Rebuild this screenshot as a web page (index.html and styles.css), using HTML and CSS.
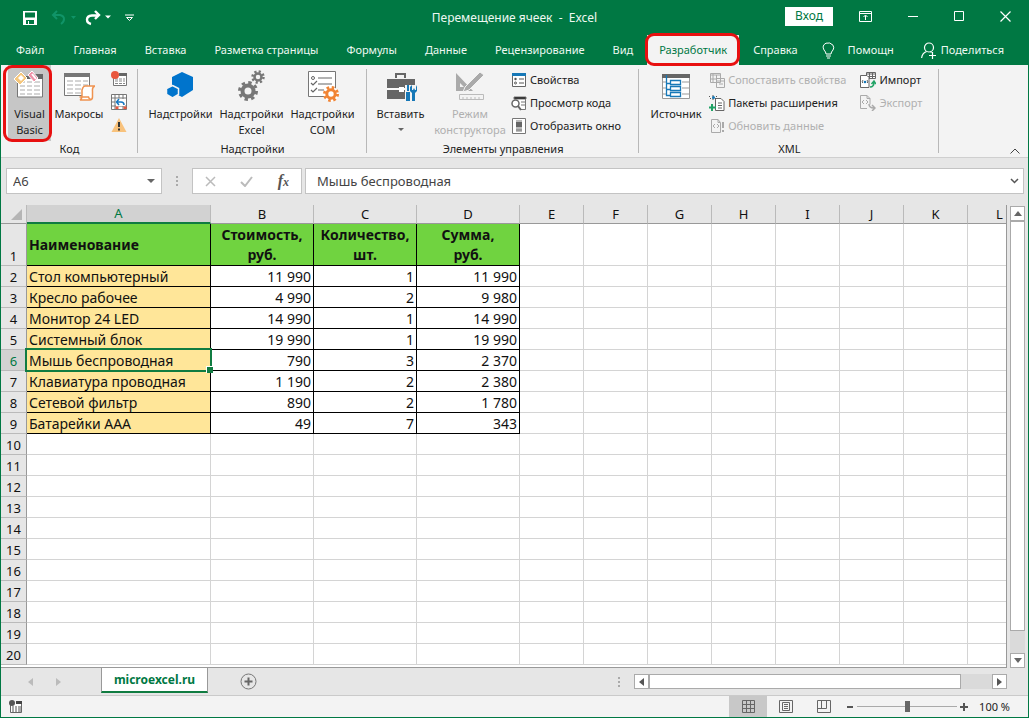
FILE: index.html
```html
<!DOCTYPE html>
<html lang="ru">
<head>
<meta charset="utf-8">
<title>Перемещение ячеек - Excel</title>
<link rel="stylesheet" href="styles.css">
</head>
<body>
<div class="window">
  <header class="titlebar">
    <div class="quick">
      <button aria-label="Сохранить"><svg width="16" height="16" viewBox="0 0 16 16"><path d="M1 1h14v14H1z" fill="#fff"/><path d="M3 2.500h10v5H3zM4 10h8v4H7v-3H6v3H4z" fill="#007843"/></svg></button>
      <button aria-label="Отменить" class="undo"><svg width="25" height="16" viewBox="0 0 25 16"><path d="M6 1L2 5l4 4M2 5h7q4 1 4 4t-3 5" fill="none" stroke="#109468" stroke-width="2"/><path d="M20 6h5l-2.500 3z" fill="#109468"/></svg></button>
      <button aria-label="Вернуть"><svg width="26" height="16" viewBox="0 0 26 16"><path d="M10 1l4 4-4 4M14 5.500H7Q2 6 2 9.500T6 14" fill="none" stroke="#fff" stroke-width="2.400"/><path d="M20 5.500h6l-3 3z" fill="#fff"/></svg></button>
      <button aria-label="Настройка панели"><svg width="9" height="8" viewBox="0 0 9 8"><path d="M0 1h9M1.500 3.500h6l-3 3z" fill="none" stroke="#fff"/></svg></button>
    </div>
    <div class="doc-title">Перемещение ячеек&nbsp; -&nbsp; Excel</div>
    <div class="win-controls">
      <button class="login">Вход</button>
      <button aria-label="Параметры ленты"><svg width="13" height="11" viewBox="0 0 13 11"><path d="M.5.5h12v10H.5zM.5 2.500h12M6.500 9V4.500M4.500 6l2-2 2 2" fill="none" stroke="#fff"/></svg></button>
      <button aria-label="Свернуть"><svg width="10" height="11" viewBox="0 0 10 11"><path d="M0 5.500h10" stroke="#fff"/></svg></button>
      <button aria-label="Развернуть"><svg width="10" height="11" viewBox="0 0 10 11"><path d="M.5.5h9v9h-9z" fill="none" stroke="#fff"/></svg></button>
      <button aria-label="Закрыть"><svg width="11" height="11" viewBox="0 0 11 11"><path d="M.5.5l10 10M10.500.5l-10 10" stroke="#fff" stroke-width="1.200"/></svg></button>
    </div>
  </header>
  <nav class="tabs">
    <button class="file">Файл</button><button>Главная</button><button>Вставка</button><button>Разметка страницы</button><button>Формулы</button><button>Данные</button><button>Рецензирование</button><button>Вид</button><button class="active">Разработчик</button><button>Справка</button>
    <button class="help"><svg width="13" height="17" viewBox="0 0 13 17"><path d="M4 12q0-2-2-4Q-.5 3.500 4 1.200q4-1.400 7 2Q12.500 6 11 8 9 10 9 12zM4 14h5M5 16h3" fill="none" stroke="#fff"/></svg>Помощн</button>
    <button class="share"><svg width="16" height="17" viewBox="0 0 16 17"><circle cx="8" cy="5.500" r="4.500" fill="none" stroke="#fff" stroke-width="1.200"/><path d="M.6 16q.6-5 5-6.500M9.500 9.500l1 1M8 13.500h7M11.500 10v7" fill="none" stroke="#fff" stroke-width="1.200"/></svg>Поделиться</button>
  </nav>

  <section class="ribbon">
    <div class="group">
      <div class="tools code">
        <button class="big vb"><svg width="32" height="32" viewBox="0 0 32 32"><path d="M3.500 8v19h25V6" fill="#fff" stroke="#777"/><path d="M19 4h10v5H3V6h16z" fill="#666"/><path d="M6 12h5M13 12h5M20 12h6M6 16h5M13 16h5M20 16h6M6 20h5M13 20h5M20 20h6M6 24h5M13 24h5M20 24h6" stroke="#aaa"/><path d="M0 9l7-7 6 6-7 7z" fill="#f5c77d" stroke="#fff"/><path d="M4 8l3-3 3 3-3 3z" fill="#fff"/><path d="M14 5l4-4 6 7-4 4z" fill="#f090a7" stroke="#fff"/><path d="M18 4l4 5" stroke="#fff" stroke-width="2"/></svg><span>Visual<br>Basic</span></button>
        <button class="big macros"><svg width="32" height="32" viewBox="0 0 32 32"><path d="M1.500 4.500h25v21h-25z" fill="#fff" stroke="#777"/><path d="M1 3h26v4H1z" fill="#777"/><path d="M4 11h6M12 11h6M20 11h5M4 15h6M12 15h6M20 15h5M4 19h6M12 19h6M4 23h6M12 23h6" stroke="#aaa"/><path d="M20 17.500q1-2 3-1.500h9q-3 1-2.500 5v6q0 3-3 3H17q2-1 2-4v-6z" fill="#fff" stroke="#ef9350" stroke-width="1.500"/><path d="M16.500 27h9q1 3 3 2" fill="none" stroke="#ef9350" stroke-width="1.500"/></svg><span>Макросы</span></button>
        <div class="mini">
          <button aria-label="Запись макроса"><svg width="16" height="16" viewBox="0 0 16 16"><path d="M2.500 3.500h13v11h-13z" fill="#fff" stroke="#777"/><path d="M8 2h8v3H8z" fill="#666"/><path d="M4 8h3M8 8h3M12 8h2M4 10h3M8 10h3M12 10h2M4 12.500h3M8 12.500h3M12 12.500h2" stroke="#888"/><circle cx="4" cy="4" r="4" fill="#e9573e"/></svg></button>
          <button aria-label="Относительные ссылки"><svg width="16" height="16" viewBox="0 0 16 16"><path d="M.5.5h15v15H.5zM.5 4h15M4 .5v15M8 .5V4M12 .5v15M.5 8H4M.5 12h15" fill="#fff" stroke="#777"/><path d="M5 5h9v7H5z" fill="#fff"/><path d="M8 5L5.500 8 8 11M6 8h4q3 0 3 3" fill="none" stroke="#1778c2" stroke-width="1.500"/><path d="M4.500 12.500h3v2.500h-3zM12.500 12.500h3v2.500h-3z" fill="#e9573e"/></svg></button>
          <button aria-label="Безопасность макросов"><svg width="16" height="16" viewBox="0 0 16 16"><path d="M8 1l7.500 14H.5z" fill="#f8c27c"/><path d="M8 5v5M8 11.500v2" stroke="#333" stroke-width="2"/></svg></button>
        </div>
      </div>
      <div class="caption">Код</div>
    </div>
    <div class="group">
      <div class="tools addins">
        <button class="big"><svg width="32" height="32" viewBox="0 0 32 32"><path d="M17 2l11 5v13l-11 7L7 22V7z" fill="#0074cc"/><path d="M7.500 15.500l6 3v6l-6 3.500-6-3.500v-6z" fill="#0074cc" stroke="#f3f3f3" stroke-width="1.500"/></svg><span>Надстройки</span></button>
        <button class="big"><svg width="32" height="32" viewBox="0 0 32 32"><circle cx="12" cy="21" r="5.500" fill="none" stroke="#777" stroke-width="4"/><circle cx="12" cy="21" r="8.500" fill="none" stroke="#777" stroke-width="3" stroke-dasharray="3.400 3.275"/><circle cx="22" cy="7" r="3.500" fill="none" stroke="#777" stroke-width="2.500"/><circle cx="22" cy="7" r="5.500" fill="none" stroke="#777" stroke-width="2.500" stroke-dasharray="2.160 2.160"/></svg><span>Надстройки<br>Excel</span></button>
        <button class="big"><svg width="34" height="32" viewBox="0 0 34 32"><path d="M2.500 1.500h27v25h-27z" fill="#fff" stroke="#777"/><circle cx="7" cy="8" r="1.500" fill="none" stroke="#666"/><path d="M12 8h14M12 14h14M12 20h6M5 13l2 2 4-4M5 20l2 2 4-4" fill="none" stroke="#666" stroke-width="1.200"/><circle cx="25" cy="24" r="7.500" fill="#fff"/><circle cx="25" cy="24" r="4.200" fill="none" stroke="#f18434" stroke-width="3"/><circle cx="25" cy="24" r="6.500" fill="none" stroke="#f18434" stroke-width="3" stroke-dasharray="2.550 2.550"/></svg><span>Надстройки<br>COM</span></button>
      </div>
      <div class="caption">Надстройки</div>
    </div>
    <div class="group">
      <div class="tools controls">
        <button class="big insert"><svg width="32" height="32" viewBox="0 0 32 32"><path d="M11 8V4h9v4" fill="none" stroke="#666" stroke-width="2"/><path d="M2 9h28v9H2zM2 20h18v9H2z" fill="#666"/><path d="M2 19h13M18 19h4" stroke="#fff"/><path d="M14 17h5v5h-5z" fill="#fff"/><path d="M20 15h12v17H20z" fill="#f3f3f3"/><path d="M22 15h2v6h-2zM21 22h4v9h-4zM27 15v5h1l1-2 1 2h1v-5l1 2v4l-2 2v8h-3v-8l-2-2v-4z" fill="#1778b7"/></svg><span>Вставить</span><i class="caret"></i></button>
        <button class="big design" disabled><svg width="32" height="32" viewBox="0 0 32 32"><path d="M2 3l17 18H2zM6 13v4h4z" fill="#aaa" fill-rule="evenodd"/><path d="M11 17L26 2l4 3-15 15-6 2z" fill="#aaa" stroke="#f3f3f3"/><path d="M5.500 24.500h24v5h-24zM9 27v2M13 27v2M17 27v2M21 27v2M25 27v2" fill="none" stroke="#bbb"/></svg><span>Режим<br>конструктора</span></button>
        <div class="list">
          <button><svg width="16" height="16" viewBox="0 0 16 16"><path d="M1.500 1.500h13v13h-13z" fill="#fff" stroke="#666"/><path d="M1 1h14v3H1z" fill="#1778b7"/><circle cx="4.500" cy="7" r="1.200" fill="#555"/><circle cx="4.500" cy="11" r="1" fill="#fff" stroke="#555"/><path d="M8 7h5M8 11h5" stroke="#555"/></svg>Свойства</button>
          <button><svg width="16" height="16" viewBox="0 0 16 16"><path d="M3.500 2.500h11v12H9" fill="#fff" stroke="#777"/><path d="M3 2h12v2H3zM10 7h4M10 10h4" stroke="#777"/><circle cx="4.500" cy="8.500" r="3.500" fill="#fff" stroke="#666" stroke-width="1.500"/><path d="M7 11l3 4" stroke="#666" stroke-width="2"/></svg>Просмотр кода</button>
          <button><svg width="16" height="16" viewBox="0 0 16 16"><path d="M1.500.5h13v15h-13z" fill="#fff" stroke="#777"/><path d="M5 2h6v12H5z" fill="#bbb"/><path d="M5 4h6v5H5z" fill="#666"/><path d="M5 12h6" stroke="#777"/></svg>Отобразить окно</button>
        </div>
      </div>
      <div class="caption">Элементы управления</div>
    </div>
    <div class="group">
      <div class="tools xml">
        <button class="big source"><svg width="32" height="32" viewBox="0 0 32 32"><path d="M2.500 4.500h27v24h-27z" fill="#fff" stroke="#999"/><path d="M2 4h28v4H2z" fill="#666"/><path d="M22 12h7M22 18h7M22 24h7M3 12h3M3 18h3M3 24h3" stroke="#999"/><path d="M6.500 5v20.500H10M6.500 13.500H10M6.500 19.500H10M10.500 10.500h10v4h-10zM10.500 16.500h10v4h-10zM10.500 22.500h10v4h-10z" fill="none" stroke="#1778b7" stroke-width="1.300"/></svg><span>Источник</span></button>
        <div class="list">
          <button disabled><svg width="16" height="16" viewBox="0 0 16 16"><path d="M1.500 1.500h10v9h-10zM1 3h11M4 1v10M7.500 3v8M1 7h7M7.500 6.500h8v9h-8zM7 9h9M10 12h4" fill="none" stroke="#aaa"/></svg>Сопоставить свойства</button>
          <button><svg width="16" height="16" viewBox="0 0 16 16"><path d="M6.500 3.500H12l3 3v9H6.500zM9 8h4M9 10.500h4M9 13h4" fill="#fff" stroke="#666"/><path d="M0 2l1-1M2 3L1 4M7 2l1-1M6 3l1 1M3 1h2M3 4h2" stroke="#555"/><circle cx="4.500" cy="2.500" r="1.500" fill="#1778b7"/><path d="M3 9v7M0 12.500h7" stroke="#21a366" stroke-width="2"/></svg>Пакеты расширения</button>
          <button disabled><svg width="16" height="16" viewBox="0 0 16 16"><path d="M2.500 1.500H9l2.500 3v10h-9zM9 1.500v3h2M6 6L4 8l2 2M8 6l2 2-2 2" fill="none" stroke="#aaa"/><path d="M14 4v6M14 12v2" stroke="#aaa" stroke-width="2"/></svg>Обновить данные</button>
        </div>
        <div class="list">
          <button><svg width="16" height="16" viewBox="0 0 16 16"><path d="M6.500.5h9v6h-9zM6 2h10M9.500 1v5M12.500 1v5M6 4.500h10" fill="#fff" stroke="#666"/><path d="M.5 3.500H7l2 2v10H.5z" fill="#fff" stroke="#666"/><path d="M3 8l-1 2 1 1M7 8l1 2-1 1" fill="none" stroke="#666"/><circle cx="5" cy="10" r="1.300" fill="#1778b7"/><path d="M10 15q4 0 4-5M11.500 12L14 9l2 3" fill="none" stroke="#21a366" stroke-width="1.500"/></svg>Импорт</button>
          <button disabled><svg width="16" height="16" viewBox="0 0 16 16"><path d="M.5.5H7l3 3v6M.5.5v13H7M7 .5v3h3M4 5L2 7l2 2M6 5l2 2-2 2" fill="none" stroke="#aaa"/><path d="M9 9q0 4 5 4M12 10l3 3-3 3" fill="none" stroke="#aaa" stroke-width="1.500"/></svg>Экспорт</button>
        </div>
      </div>
      <div class="caption">XML</div>
    </div>
    <button class="collapse" aria-label="Свернуть ленту"><svg width="10" height="6" viewBox="0 0 10 6"><path d="M.5 5.500L5 1l4.500 4.500" fill="none" stroke="#444"/></svg></button>
  </section>

  <section class="formula-bar">
    <div class="name-box"><input value="A6" aria-label="Имя"><i class="caret"></i></div>
    <span class="grip"><i></i><i></i><i></i></span>
    <div class="fx">
      <button aria-label="Отмена"><svg width="11" height="11" viewBox="0 0 11 11"><path d="M1 1l9 9M10 1l-9 9" stroke="#bbb" stroke-width="1.500"/></svg></button>
      <button aria-label="Ввод"><svg width="13" height="11" viewBox="0 0 13 11"><path d="M1 6l4 4 7-9" fill="none" stroke="#bbb" stroke-width="2"/></svg></button>
      <button class="fn" aria-label="Вставить функцию">f<small>x</small></button>
    </div>
    <div class="formula"><input value="Мышь беспроводная" aria-label="Формула"><svg width="9" height="6" viewBox="0 0 9 6"><path d="M1 1l3.500 3.500L8 1" fill="none" stroke="#555" stroke-width="1.500"/></svg></div>
  </section>

  <main class="workspace">
    <div class="sheet">
      <table>
        <colgroup><col class="c-head"><col class="c-a"><col class="c-b"><col class="c-b"><col class="c-b"><col class="c-e"><col class="c-e"><col class="c-e"><col class="c-e"><col class="c-e"><col class="c-e"><col class="c-e"><col class="c-e"></colgroup>
        <thead><tr><th class="corner"><i></i></th><th class="sel">A</th><th>B</th><th>C</th><th>D</th><th>E</th><th>F</th><th>G</th><th>H</th><th>I</th><th>J</th><th>K</th><th>L</th></tr></thead>
        <tbody>
          <tr class="head"><th>1</th><td class="h left">Наименование</td><td class="h">Стоимость,<br>руб.</td><td class="h">Количество,<br>шт.</td><td class="h">Сумма,<br>руб.</td><td></td><td></td><td></td><td></td><td></td><td></td><td></td><td></td></tr>
          <tr><th>2</th><td class="n">Стол компьютерный</td><td class="v">11 990</td><td class="v">1</td><td class="v">11 990</td><td></td><td></td><td></td><td></td><td></td><td></td><td></td><td></td></tr>
          <tr><th>3</th><td class="n">Кресло рабочее</td><td class="v">4 990</td><td class="v">2</td><td class="v">9 980</td><td></td><td></td><td></td><td></td><td></td><td></td><td></td><td></td></tr>
          <tr><th>4</th><td class="n">Монитор 24 LED</td><td class="v">14 990</td><td class="v">1</td><td class="v">14 990</td><td></td><td></td><td></td><td></td><td></td><td></td><td></td><td></td></tr>
          <tr><th>5</th><td class="n">Системный блок</td><td class="v">19 990</td><td class="v">1</td><td class="v">19 990</td><td></td><td></td><td></td><td></td><td></td><td></td><td></td><td></td></tr>
          <tr><th class="sel">6</th><td class="n cursor">Мышь беспроводная</td><td class="v">790</td><td class="v">3</td><td class="v">2 370</td><td></td><td></td><td></td><td></td><td></td><td></td><td></td><td></td></tr>
          <tr><th>7</th><td class="n">Клавиатура проводная</td><td class="v">1 190</td><td class="v">2</td><td class="v">2 380</td><td></td><td></td><td></td><td></td><td></td><td></td><td></td><td></td></tr>
          <tr><th>8</th><td class="n">Сетевой фильтр</td><td class="v">890</td><td class="v">2</td><td class="v">1 780</td><td></td><td></td><td></td><td></td><td></td><td></td><td></td><td></td></tr>
          <tr><th>9</th><td class="n">Батарейки ААА</td><td class="v">49</td><td class="v">7</td><td class="v">343</td><td></td><td></td><td></td><td></td><td></td><td></td><td></td><td></td></tr>
          <tr><th>10</th><td></td><td></td><td></td><td></td><td></td><td></td><td></td><td></td><td></td><td></td><td></td><td></td></tr>
          <tr><th>11</th><td></td><td></td><td></td><td></td><td></td><td></td><td></td><td></td><td></td><td></td><td></td><td></td></tr>
          <tr><th>12</th><td></td><td></td><td></td><td></td><td></td><td></td><td></td><td></td><td></td><td></td><td></td><td></td></tr>
          <tr><th>13</th><td></td><td></td><td></td><td></td><td></td><td></td><td></td><td></td><td></td><td></td><td></td><td></td></tr>
          <tr><th>14</th><td></td><td></td><td></td><td></td><td></td><td></td><td></td><td></td><td></td><td></td><td></td><td></td></tr>
          <tr><th>15</th><td></td><td></td><td></td><td></td><td></td><td></td><td></td><td></td><td></td><td></td><td></td><td></td></tr>
          <tr><th>16</th><td></td><td></td><td></td><td></td><td></td><td></td><td></td><td></td><td></td><td></td><td></td><td></td></tr>
          <tr><th>17</th><td></td><td></td><td></td><td></td><td></td><td></td><td></td><td></td><td></td><td></td><td></td><td></td></tr>
          <tr><th>18</th><td></td><td></td><td></td><td></td><td></td><td></td><td></td><td></td><td></td><td></td><td></td><td></td></tr>
          <tr><th>19</th><td></td><td></td><td></td><td></td><td></td><td></td><td></td><td></td><td></td><td></td><td></td><td></td></tr>
          <tr><th>20</th><td></td><td></td><td></td><td></td><td></td><td></td><td></td><td></td><td></td><td></td><td></td><td></td></tr>
        </tbody>
      </table>
    </div>
    <div class="vscroll">
      <button aria-label="Вверх"><svg width="8" height="5" viewBox="0 0 8 5"><path d="M0 5l4-5 4 5z" fill="#666"/></svg></button>
      <div class="vtrack"><div class="vthumb"></div></div>
      <button aria-label="Вниз"><svg width="8" height="5" viewBox="0 0 8 5"><path d="M0 0l4 5 4-5z" fill="#666"/></svg></button>
    </div>
  </main>

  <div class="sheetbar">
    <div class="sheet-nav">
      <button aria-label="Предыдущий лист"><svg width="5" height="8" viewBox="0 0 5 8"><path d="M5 0v8L0 4z" fill="#bbb"/></svg></button>
      <button aria-label="Следующий лист"><svg width="5" height="8" viewBox="0 0 5 8"><path d="M0 0v8l5-4z" fill="#bbb"/></svg></button>
    </div>
    <button class="sheet-tab">microexcel.ru</button>
    <button class="add" aria-label="Новый лист"><svg width="17" height="17" viewBox="0 0 17 17"><circle cx="8.500" cy="8.500" r="7.500" fill="none" stroke="#777"/><path d="M8.500 4.500v8M4.500 8.500h8" stroke="#666" stroke-width="2"/></svg></button>
    <span class="grip"><i></i><i></i><i></i></span>
    <div class="hscroll">
      <button aria-label="Влево"><svg width="5" height="8" viewBox="0 0 5 8"><path d="M5 0v8L0 4z" fill="#555"/></svg></button>
      <div class="htrack"><div class="hthumb"></div></div>
      <button aria-label="Вправо"><svg width="5" height="8" viewBox="0 0 5 8"><path d="M0 0v8l5-4z" fill="#555"/></svg></button>
    </div>
  </div>

  <footer class="status">
    <button class="record" aria-label="Запись макроса"><svg width="14" height="14" viewBox="0 0 14 14"><path d="M1.500 4v8.500h11V2" fill="#fff" stroke="#666"/><path d="M7 1h6v3H7z" fill="#444"/><path d="M3 7h2M6 7h2M9 7h3M3 9h2M6 9h2M9 9h3M3 11h2M6 11h2M9 11h3" stroke="#555"/><circle cx="3" cy="3" r="3" fill="#555"/></svg></button>
    <button class="view on" aria-label="Обычный"><svg width="13" height="13" viewBox="0 0 13 13"><path d="M.5.5h12v12H.5zM4.500 0v13M8.500 0v13M0 4.500h13M0 8.500h13" fill="none" stroke="#666"/></svg></button>
    <button class="view" aria-label="Разметка"><svg width="14" height="13" viewBox="0 0 14 13"><path d="M.5.5h13v12H.5zM3.500 2.500h7v8h-7zM5 4.500h4M5 6.500h4M5 8.500h4" fill="none" stroke="#666"/></svg></button>
    <button class="view" aria-label="Страничный"><svg width="14" height="13" viewBox="0 0 14 13"><path d="M.5.5h13v12H.5zM4.500 0v8.500M9.500 0v8.500M0 8.500h9.500" fill="none" stroke="#666"/></svg></button>
    <button class="zoom-btn" aria-label="Уменьшить"><svg width="8" height="8" viewBox="0 0 8 8"><path d="M1 4h6" stroke="#555" stroke-width="2"/></svg></button>
    <input class="zoom" type="range" min="0" max="100" value="50" aria-label="Масштаб">
    <button class="zoom-btn" aria-label="Увеличить"><svg width="8" height="8" viewBox="0 0 8 8"><path d="M0 4h8M4 0v8" stroke="#555" stroke-width="2"/></svg></button>
    <span class="percent">100 %</span>
  </footer>
</div>
</body>
</html>
```
FILE: styles.css
```css
* { box-sizing: border-box; }
body { margin: 0; font: 11px/16px "Noto Sans", "Open Sans", sans-serif; color: #222; }
button, input { font: inherit; color: inherit; margin: 0; padding: 0; border: 0; background: none; }
svg { display: block; flex: none; }
.window { display: flex; flex-direction: column; height: 100vh; overflow: hidden; background: #e6e6e6; border: 1px solid #007843; border-top: 0; }

.titlebar { display: grid; grid-template-columns: 1fr auto 1fr; align-items: center; height: 35px; flex: none; background: #007843; color: #eef8f2; font-size: 12px; }
.quick { display: flex; align-items: center; gap: 9px; padding-left: 21px; }
.quick .undo { margin-left: 4px; }
.quick button:last-child { margin-left: 5px; }
.win-controls { display: flex; align-items: center; justify-content: flex-end; gap: 36px; padding: 0 17px 3px 0; }
.login { width: 48px; height: 19px; margin-right: -10px; background: #fff; color: #007843; }

.tabs { display: flex; height: 30px; flex: none; background: #007843; color: #eef8f2; }
.tabs button { padding: 0 14px; white-space: nowrap; }
.tabs .file { padding: 0 15px; }
.tabs .active { position: relative; z-index: 2; padding: 0 12px; background: #f3f3f3; color: #007843; }
.tabs .active::after { content: ""; position: absolute; inset: -2px -1px -1px -2px; border: 3px solid #e81010; border-radius: 9px; }
.tabs .help, .tabs .share { display: flex; align-items: center; gap: 13px; padding: 0 10px; }
.tabs .share { gap: 4px; margin-left: auto; padding: 0 24px 0 8px; }

.ribbon { position: relative; display: flex; height: 93px; flex: none; background: #f3f3f3; border-bottom: 1px solid #cfcfcf; }
.group { display: flex; flex-direction: column; position: relative; }
.group::after { content: ""; position: absolute; right: 0; top: 4px; bottom: 4px; border-right: 1px solid #b8b8b8; }
.tools { display: flex; height: 76px; }
.caption { text-align: center; }
.big { display: flex; flex-direction: column; align-items: center; padding-top: 5px; width: 71px; white-space: nowrap; }
.big svg { margin-bottom: 4px; }
.big:disabled, .list button:disabled { color: #b0b0b0; }
.code { width: 137px; padding-left: 7px; }
.vb { position: relative; width: 43px; background: #c6c6c6; }
.vb::after { content: ""; position: absolute; inset: 0 -1px -1px -5px; border: 3px solid #e81010; border-radius: 9px; }
.macros { width: 56px; }
.mini { display: flex; flex-direction: column; gap: 7px; padding: 6px 0 0 4px; }
.addins { padding: 0 9px 0 7px; }
.controls { padding: 0 18px 0 0; }
.insert { width: 67px; }
.design { width: 72px; margin-right: 5px; }
.caret { display: block; width: 0; border: 4px solid transparent; border-top: 4px solid #666; border-bottom: 0; }
.insert .caret { border-width: 3px 3px 0; margin-top: 6px; }
.list { display: flex; flex-direction: column; padding-top: 3px; }
.list button { display: flex; align-items: center; gap: 3px; height: 23px; white-space: nowrap; }
.xml { padding: 0 17px 0 4px; }
.source { width: 66px; }
.xml .list + .list { margin-left: 14px; }
.collapse { position: absolute; right: 8px; bottom: 3px; }

.formula-bar { display: flex; height: 47px; flex: none; padding: 10px 4px 11px 5px; font-size: 13px; color: #444; }
.name-box, .fx, .formula { display: flex; align-items: center; background: #fff; border: 1px solid #c3c3c3; }
.name-box { width: 156px; padding: 0 6px; }
.name-box input, .formula input { flex: 1; min-width: 0; width: 100%; }
.grip { display: flex; flex-direction: column; justify-content: center; gap: 2px; width: 30px; align-items: center; }
.grip i { width: 2px; height: 2px; background: #aaa; }
.fx { width: 110px; justify-content: space-between; padding: 0 12px; margin-right: 3px; }
.fn { font: italic bold 16px "Liberation Serif", serif; color: #555; }
.fn small { font-size: 12px; }
.formula { flex: 1; padding: 0 4px 0 11px; }

.workspace { display: flex; flex: 1; min-height: 0; }
.sheet { flex: 1; min-width: 0; overflow: hidden; border-right: 1px solid #999; border-bottom: 1px solid #999; background: #fff; }
table { border-collapse: separate; border-spacing: 0; table-layout: fixed; width: 1030px; font-size: 14px; line-height: 18px; color: #111; }
.c-head { width: 26px; }
.c-a { width: 184px; }
.c-b { width: 103px; }
.c-e { width: 64px; }
th, td { padding: 2px 0 0; height: 21px; white-space: nowrap; border-right: 1px solid #d4d4d4; border-bottom: 1px solid #d4d4d4; }
th { font-weight: 400; font-size: 13px; background: #e6e6e6; border-color: #bababa; vertical-align: bottom; }
thead th { padding: 0; height: 19px; line-height: 18px; border-bottom-color: #999; }
tbody th { border-right-color: #999; }
th.sel { background: #d2d2d2; color: #007843; }
thead th.sel { border-bottom: 2px solid #107c41; line-height: 17px; }
.corner i { display: block; width: 11px; height: 11px; margin: 0 0 3px 10px; background: #b5b5b5; clip-path: polygon(100% 0, 100% 100%, 0 100%); }
.head td { height: 42px; }
.h { padding-top: 1px; background: #70d340; border-color: #000; font-weight: 700; text-align: center; line-height: 20px; }
.h.left { text-align: left; padding-left: 2px; }
.n { background: #ffe699; border-color: #000; padding-left: 2px; }
.v { border-color: #000; text-align: right; padding-right: 2px; }
.cursor { position: relative; }
.cursor::before { content: ""; position: absolute; inset: -2px; border: 2px solid #107c41; }
.cursor::after { content: ""; position: absolute; right: -3px; bottom: -3px; width: 6px; height: 6px; background: #107c41; border: 1px solid #fff; border-width: 1px 0 0 1px; }

.vscroll { display: flex; flex-direction: column; width: 18px; margin: 0 2px 0 1px; padding: 1px 1px 0 2px; }
.vscroll button, .hscroll button { display: grid; place-items: center; width: 15px; height: 15px; background: #fff; border: 1px solid #aaa; flex: none; }
.vtrack { flex: 1; background: #dadada; }
.vthumb { height: 95%; background: #fff; border: 1px solid #aaa; }

.sheetbar { display: flex; height: 28px; flex: none; border-bottom: 1px solid #cacaca; }
.sheet-nav { display: flex; gap: 23px; width: 100px; padding-left: 27px; }
.sheet-tab { width: 107px; height: 25px; background: #fff; color: #007843; border: 1px solid #999; border-width: 0 1px 2px; border-bottom-color: #107c41; font-weight: 700; font-size: 12px; }
.add { margin: 0 auto 0 32px; }
.sheetbar .grip { width: 30px; }
.hscroll { display: flex; width: 373px; margin-right: 21px; padding-top: 6px; }
.htrack { flex: 1; height: 15px; background: #dadada; }
.hthumb { width: 91%; height: 15px; background: #fff; border: 1px solid #aaa; }

.status { display: flex; align-items: center; height: 21px; flex: none; background: #f3f3f3; padding-right: 18px; }
.record { margin: 0 auto 0 8px; }
.view { display: grid; place-items: center; width: 38px; height: 21px; }
.view.on { background: #c8c8c8; }
.zoom-btn { margin: 0 3px; }
.zoom { appearance: none; width: 100px; height: 12px; background: linear-gradient(#aaa, #aaa) center / 100% 1px no-repeat; }
.zoom::-webkit-slider-thumb { appearance: none; width: 5px; height: 11px; background: #666; }
.percent { margin-left: 8px; }
```
